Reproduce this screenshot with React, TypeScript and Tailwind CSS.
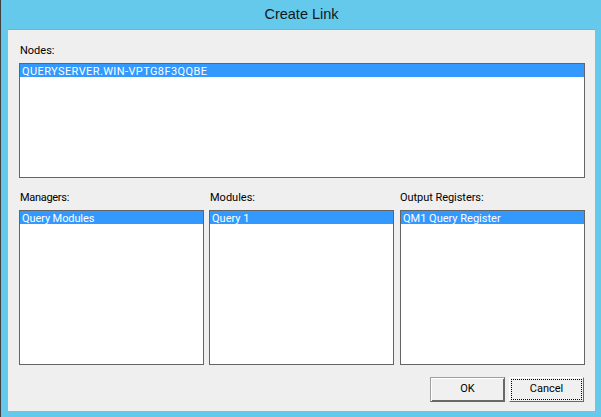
const font = "[font-family:Roboto,'Liberation_Sans',Arial,sans-serif]";

function ListBox({ label, item, className, labelClass = "pl-px", itemClass = "" }: { label: string; item: string; className: string; labelClass?: string; itemClass?: string }) {
  return (
    <div className={`flex flex-col ${className}`}>
      <div className={`h-[19px] text-[11px] leading-[14px] text-black ${labelClass}`}>{label}</div>
      <div className="flex-1 border border-[#646464] bg-white">
        <div className={`h-[13px] bg-[#3399ff] pl-[2px] text-[11px] leading-[15px] text-white ${itemClass}`}>{item}</div>
      </div>
    </div>
  );
}

export default function App() {
  return (
    <div className={`flex h-[417px] w-[601px] bg-[#65c9eb] ${font}`}>
      <div className="w-px bg-[#404040]" />
      <div className="flex flex-1 flex-col pl-[7px] pr-[6px] pb-[6px]">
        <div className="flex h-[29px] items-center justify-center pt-[1px] font-['Liberation_Sans'] text-[14.5px] text-[#101820]">Create Link</div>
        <div className="flex flex-1 flex-col border-t border-[#9aa5ab] bg-[#efefef] pl-[11px] pr-[10px] pb-[9px] pt-[14px]">
          <ListBox label="Nodes:" item="QUERYSERVER.WIN-VPTG8F3QQBE" className="h-[134px]" itemClass="tracking-[0.4px]" />
          <div className="mt-[13px] flex h-[174px] gap-[5px]">
            <ListBox label="Managers:" item="Query Modules" className="w-[185px]" labelClass="pl-px tracking-[-0.3px]" itemClass="tracking-[-0.1px]" />
            <ListBox label="Modules:" item="Query 1" className="w-[185px]" />
            <ListBox label="Output Registers:" item="QM1 Query Register" className="ml-px w-[185px]" labelClass="tracking-[-0.05px]" />
          </div>
          <div className="mt-[12px] flex justify-end gap-[4px] pr-px">
            <button className="flex h-[25px] w-[75px] items-center justify-center border border-t-[#a0a0a0] border-l-[#a0a0a0] border-r-[#696969] border-b-[#696969] bg-[#f0f0f0] text-[11px] text-black shadow-[inset_1px_1px_0_#ffffff,inset_-1px_-1px_0_#696969]">OK</button>
            <button className="flex h-[25px] w-[75px] items-center justify-center border border-t-white border-l-white border-r-[#696969] border-b-[#696969] bg-[#f0f0f0] text-[11px] text-black">
              <span className="flex h-[21px] w-[71px] items-center justify-center border border-dotted border-black">Cancel</span>
            </button>
          </div>
        </div>
      </div>
    </div>
  );
}
